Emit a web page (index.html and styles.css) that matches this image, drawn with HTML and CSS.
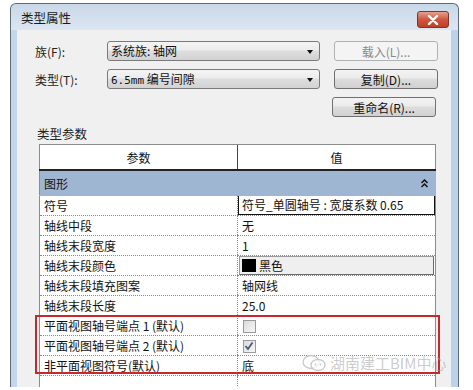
FILE: index.html
```html
<!DOCTYPE html>
<html lang="zh-CN">
<head>
    <meta charset="UTF-8">
    <title>类型属性</title>
    <link rel="stylesheet" href="styles.css">
</head>
<body>
    <div class="window">
        <div class="titlebar">
            <span class="title">类型属性</span>
            <span class="close">
                <svg width="12" height="10" viewBox="0 0 12 10"><path d="M2 1 L10 9 M10 1 L2 9" stroke="#fff" stroke-width="2.4" stroke-linecap="round"/></svg>
            </span>
        </div>
        <div class="content">
            <div class="form-row">
                <span class="label">族(F):</span>
                <div class="combo">系统族: 轴网<span class="arrow"></span></div>
                <button class="btn disabled">载入(L)...</button>
            </div>
            <div class="form-row">
                <span class="label">类型(T):</span>
                <div class="combo"><span class="mono">6.5mm</span>&nbsp;编号间隙<span class="arrow"></span></div>
                <button class="btn">复制(D)...</button>
            </div>
            <div class="form-row">
                <span class="label"></span>
                <div class="combo-space"></div>
                <button class="btn">重命名(R)...</button>
            </div>
            <div class="section-label">类型参数</div>

            <div class="table-wrap">
                <table class="params">
                    <tr class="head">
                        <th>参数</th>
                        <th>值</th>
                    </tr>
                    <tr class="group">
                        <td colspan="2">图形
                            <svg class="chev" width="9" height="9" viewBox="0 0 9 9"><path d="M1.5 4 L4.5 1 L7.5 4 M1.5 8 L4.5 5 L7.5 8" fill="none" stroke="#111" stroke-width="1.5"/></svg>
                        </td>
                    </tr>
                    <tr>
                        <td>符号</td>
                        <td class="boxed"><div class="edit">符号_单圆轴号 : 宽度系数 0.65</div></td>
                    </tr>
                    <tr>
                        <td>轴线中段</td>
                        <td>无</td>
                    </tr>
                    <tr>
                        <td>轴线末段宽度</td>
                        <td>1</td>
                    </tr>
                    <tr>
                        <td>轴线末段颜色</td>
                        <td class="boxed"><div class="color-btn"><span class="swatch"></span>黑色</div></td>
                    </tr>
                    <tr>
                        <td>轴线末段填充图案</td>
                        <td>轴网线</td>
                    </tr>
                    <tr>
                        <td>轴线末段长度</td>
                        <td>25.0</td>
                    </tr>
                    <tr>
                        <td>平面视图轴号端点 1 (默认)</td>
                        <td><span class="check"></span></td>
                    </tr>
                    <tr>
                        <td>平面视图轴号端点 2 (默认)</td>
                        <td><span class="check on"><svg width="10" height="10" viewBox="0 0 10 10"><path d="M1.5 5 L4 8 L8.5 1.5" fill="none" stroke="#4a5a78" stroke-width="1.8"/></svg></span></td>
                    </tr>
                    <tr>
                        <td>非平面视图符号(默认)</td>
                        <td>底</td>
                    </tr>
                    <tr class="filler">
                        <td></td>
                        <td></td>
                    </tr>
                </table>
                <div class="highlight"></div>
                <div class="watermark">
                    <svg width="26" height="18" viewBox="0 0 26 18"><ellipse cx="10" cy="8" rx="8" ry="6.5" fill="none" stroke="#c8c8c8" stroke-width="1.3"/><ellipse cx="17" cy="11" rx="7" ry="5.5" fill="rgba(255,255,255,0.7)" stroke="#c8c8c8" stroke-width="1.3"/><circle cx="14.5" cy="10.5" r="0.9" fill="#c8c8c8"/><circle cx="19.5" cy="10.5" r="0.9" fill="#c8c8c8"/></svg>
                    湖南建工BIM中心
                </div>
            </div>
        </div>
    </div>
</body>
</html>
```

FILE: styles.css
```css
body {
    margin: 0;
    background: #fff;
    font-family: "Noto Sans CJK SC", "Noto Sans", sans-serif;
    font-size: 12px;
    color: #111;
}
.window {
    margin: 3px 0 0 10px;
    width: 434px;
    padding: 0 7px 0 6px;
    border: 1px solid #5d6b7a;
    border-bottom: none;
    border-radius: 6px 6px 0 0;
    background: linear-gradient(to right, #c2d6ec, #cfe0f1 40%, #bcd2ea);
}
.titlebar {
    height: 26px;
    display: flex;
    align-items: center;
    justify-content: space-between;
    background: linear-gradient(#c9d8e8, #dbe6f1);
    margin: 0 -7px 0 -6px;
    padding: 0 9px 0 10px;
    border-radius: 6px 6px 0 0;
}
.title {
    font-size: 12.5px;
    color: #1a1a1a;
    margin-top: 1px;
}
.close {
    width: 30px;
    height: 15px;
    margin-top: 5px;
    border: 1px solid #6f3a30;
    border-radius: 3px;
    background: linear-gradient(#e8a090, #d0563d 50%, #c0402a);
    display: flex;
    align-items: center;
    justify-content: center;
}
.content {
    background: #f0f0f0;
    height: 357px;
    padding-top: 11px;
    box-sizing: border-box;
}
.form-row {
    display: flex;
    align-items: center;
    height: 20px;
    margin-bottom: 8px;
}
.label {
    width: 72px;
    padding-left: 18px;
    color: #222;
}
.combo, .combo-space {
    width: 211px;
    height: 18px;
    line-height: 18px;
    position: relative;
}
.combo {
    border: 1px solid #7a7a7a;
    border-radius: 3px;
    background: linear-gradient(#f4f4f4, #ececec 45%, #dedede 50%, #d2d2d2);
    padding-left: 3px;
    box-sizing: content-box;
    width: 208px;
}
.mono {
    font-family: "DejaVu Sans Mono", monospace;
    font-size: 11px;
}
.arrow {
    position: absolute;
    right: 6px;
    top: 8px;
    border-left: 3.5px solid transparent;
    border-right: 3.5px solid transparent;
    border-top: 4px solid #111;
}
.btn {
    margin-left: 14px;
    width: 104px;
    height: 20px;
    padding: 0;
    font: inherit;
    color: #111;
    border: 1px solid #707070;
    border-radius: 3px;
    background: linear-gradient(#f3f3f3, #ebebeb 45%, #dddddd 50%, #d0d0d0);
}
.btn.disabled {
    color: #8a8a8a;
    border-color: #adb2b5;
    background: #f4f4f4;
}
.section-label {
    padding-left: 20px;
    margin-top: 3px;
    height: 19px;
    line-height: 17px;
    font-size: 12.5px;
    color: #222;
}
.table-wrap {
    position: relative;
    margin-left: 22px;
    width: 397px;
}
.params {
    width: 397px;
    border-collapse: collapse;
    table-layout: fixed;
    background: #fff;
}
.params td, .params th {
    padding: 0 0 0 4px;
    height: 19px;
    line-height: 19px;
    border-bottom: 1px dotted #8a8a8a;
    border-left: 1px dotted #8a8a8a;
    white-space: nowrap;
    overflow: hidden;
    font-weight: normal;
    text-align: left;
}
.params td:first-child {
    border-left: 1px solid #8c8c8c;
}
.params tr > :last-child {
    border-right: 1px solid #8c8c8c;
}
.params .head th {
    height: 24px;
    text-align: center;
    padding: 0;
    border-top: 1px solid #8c8c8c;
    border-left: 1px solid #444;
    border-bottom: 2px solid #222;
}
.params .head th:first-child {
    border-left: 1px solid #8c8c8c;
}
.params .group td {
    height: 24px;
    background: #9fb6d2;
    border: 1px solid #9fb6d2;
    border-left: 1px solid #8c8c8c;
    position: relative;
}
.chev {
    position: absolute;
    right: 6px;
    top: 8px;
}
.params td.boxed {
    padding: 0;
}
.edit {
    height: 18px;
    line-height: 18px;
    border: 1px solid #111;
    padding-left: 3px;
    margin-top: -1px;
}
.color-btn {
    height: 17px;
    line-height: 17px;
    margin: 0 1px;
    border: 1px solid #9a9a9a;
    border-right-color: #6a6a6a;
    border-bottom-color: #6a6a6a;
    background: #efefef;
    display: flex;
    align-items: center;
    padding-left: 2px;
}
.swatch {
    width: 14px;
    height: 13px;
    background: #000;
    margin-right: 3px;
}
.check {
    display: inline-block;
    width: 11px;
    height: 11px;
    margin: 4px 0 0 1px;
    vertical-align: top;
    border: 1px solid #9a9a9a;
    background: linear-gradient(135deg, #dcdcdc, #f6f6f6);
    position: relative;
}
.check svg {
    position: absolute;
    left: 0;
    top: 0;
}
.params .filler td {
    height: 12px;
    border-bottom: none;
}
.highlight {
    position: absolute;
    left: -4px;
    top: 171px;
    width: 401px;
    height: 55px;
    border: 2px solid #c8282c;
}
.watermark {
    position: absolute;
    left: 262px;
    top: 208px;
    display: flex;
    align-items: center;
    gap: 3px;
    font-family: "Noto Sans CJK SC", sans-serif;
    font-size: 15px;
    color: rgba(160, 160, 160, 0.55);
    white-space: nowrap;
}
```
